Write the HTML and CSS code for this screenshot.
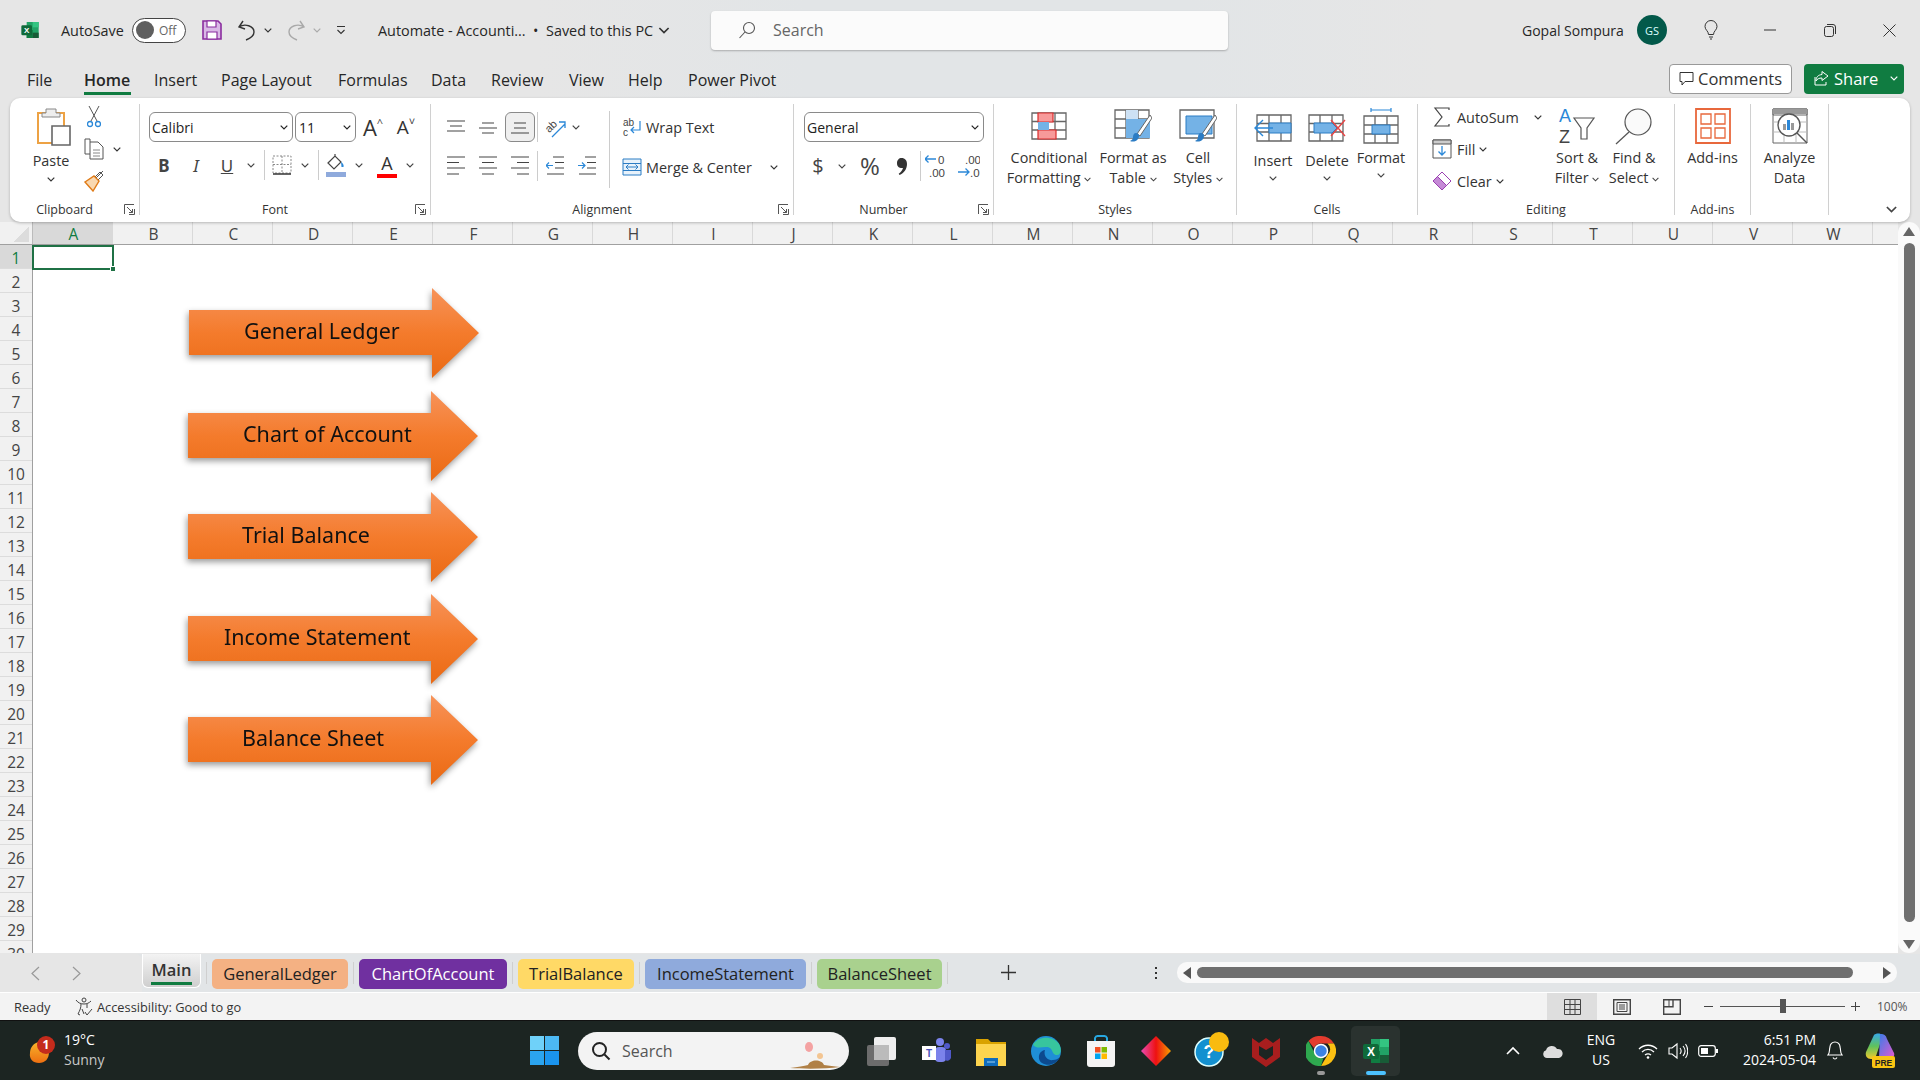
FILE: index.html
```html
<!DOCTYPE html>
<html lang="en">
<head>
<meta charset="utf-8">
<title>Automate - Accounting - Excel</title>
<link rel="stylesheet" href="styles.css">
</head>
<body>
<svg class="defs" width="0" height="0" aria-hidden="true">
  <defs>
    <symbol id="chev" viewBox="0 0 8 5"><path d="M.7.7 4 4 7.3.7" fill="none" stroke="currentColor" stroke-width="1.2"/></symbol>
    <symbol id="launch" viewBox="0 0 11 11"><path d="M.5 10V.5H10M4 1.5v0M10.5 5v5.5H5M3 3l5.5 5.5M8.5 5v3.5H5" fill="none" stroke="#555" stroke-width="1"/></symbol>
    <symbol id="xl" viewBox="0 0 30 30"><path fill="#21a366" d="M10 3h18v24H10z"/><path fill="#33c481" d="M19 3h9v8h-9z"/><path fill="#107c41" d="M10 15h9v12h-9z"/><path fill="#185c37" d="M19 19h9v8h-9z"/><rect x="2" y="8" width="16" height="15" rx="2" fill="#0f6a3a"/><text x="10" y="20" class="xl-x">X</text></symbol>
    <linearGradient id="arrowfill" x1="0" y1="0" x2="0" y2="1"><stop offset="0" stop-color="#f7935a"/><stop offset=".5" stop-color="#f47b2c"/><stop offset="1" stop-color="#ea6a14"/></linearGradient>
    <symbol id="arrow" viewBox="0 0 290 90"><path fill="url(#arrowfill)" d="M0 22h243V0l47 45-47 45V67H0z"/></symbol>
  </defs>
</svg>

<header class="titlebar">
  <svg class="logo" width="20" height="20"><use href="#xl"/></svg>
  <span class="autosave">AutoSave</span>
  <span class="toggle"><i class="knob"></i><span>Off</span></span>
  <svg class="save" width="20" height="20" viewBox="0 0 20 20"><path d="M1 1h15l3 3v15H1z" fill="#d9b8e6" stroke="#8a2c9f" stroke-width="1.6"/><path d="M5 1h9v6H5zM5 12h10v7H5z" fill="#fff" stroke="#8a2c9f" stroke-width="1.2"/></svg>
  <svg class="undo" width="19" height="21" viewBox="0 0 19 21"><path d="M6 1 2 7l6 2M2 7c6-4 15-1 15 5 0 4-3 6-8 8" fill="none" stroke="#333" stroke-width="1.4"/></svg>
  <svg class="tchev" width="8" height="5"><use href="#chev"/></svg>
  <svg class="redo" width="19" height="21" viewBox="0 0 19 21"><path d="m13 1 4 6-6 2M17 7C11 3 2 6 2 12c0 4 3 6 8 8" fill="none" stroke="#a9a9a9" stroke-width="1.4"/></svg>
  <svg class="tchev dim" width="8" height="5"><use href="#chev"/></svg>
  <svg class="custom" width="10" height="10" viewBox="0 0 10 10"><path d="M1 1.500h8M1.500 5l3.500 3.500L8.500 5" fill="none" stroke="#333" stroke-width="1.100"/></svg>
  <span class="doc">Automate - Accounti... &nbsp;•&nbsp; Saved to this PC</span>
  <svg class="docchev" width="12" height="7"><use href="#chev"/></svg>
  <div class="search"><svg width="18" height="18" viewBox="0 0 18 18"><circle cx="11" cy="7" r="5.500" fill="none" stroke="#555" stroke-width="1.100"/><path d="M7 11 1.500 17" stroke="#555" stroke-width="1.100"/></svg><span>Search</span></div>
  <span class="user">Gopal Sompura</span>
  <span class="avatar">GS</span>
  <svg class="bulb" width="14" height="20" viewBox="0 0 14 20"><path d="M4.500 14.500C4.500 11 1 10 1 6.500a6 6 0 0 1 12 0c0 3.500-3.500 4.500-3.500 8zM5 17h4M6 19h2" fill="none" stroke="#333"/></svg>
  <svg class="min" width="12" height="2"><path d="M0 1h12" stroke="#333"/></svg>
  <svg class="rest" width="12" height="13" viewBox="0 0 12 13"><rect x=".5" y="2.500" width="9" height="10" rx="2" fill="none" stroke="#333"/><path d="M3 .5h6a2.500 2.500 0 0 1 2.500 2.500v7" fill="none" stroke="#333"/></svg>
  <svg class="close" width="13" height="13" viewBox="0 0 13 13"><path d="m.5.5 12 12m0-12-12 12" stroke="#333"/></svg>
</header>

<nav class="tabs">
  <span class="t-file">File</span>
  <span class="t-home">Home</span>
  <span class="t-ins">Insert</span>
  <span class="t-pl">Page Layout</span>
  <span class="t-for">Formulas</span>
  <span class="t-data">Data</span>
  <span class="t-rev">Review</span>
  <span class="t-view">View</span>
  <span class="t-help">Help</span>
  <span class="t-pp">Power Pivot</span>
  <button class="comments"><svg width="15" height="15" viewBox="0 0 15 15"><path d="M1 1.500h13v9H6l-3 3.500v-3.500H1z" fill="none" stroke="#333"/></svg>Comments</button>
  <button class="share"><svg width="15" height="16" viewBox="0 0 15 16"><path d="M8 1.500 14 6l-6 4.500V8C5 8 3 9 2 11c0-4 2-6 6-6.500zM1 7v8h11v-3" fill="none" stroke="#fff"/></svg>Share<svg class="sharechev" width="8" height="5"><use href="#chev"/></svg></button>
</nav>

<section class="ribbon">
  <div class="group g-clip">
    <div class="body clip">
      <div class="paste">
        <svg class="pasteic" width="34" height="38" viewBox="0 0 34 38"><path d="M1 5h26v30H1z" fill="#fff" stroke="#eda244" stroke-width="2"/><path d="M9 5V1h10v4h4v4H5V5z" fill="#eee" stroke="#888"/><path d="M15 18h18v19H15z" fill="#fff" stroke="#666" stroke-width="1.600"/></svg>
        <span class="lbl">Paste</span>
        <svg class="ch" width="8" height="5"><use href="#chev"/></svg>
      </div>
      <div class="smallcol">
        <svg width="14" height="24" viewBox="0 0 14 24"><path d="M2 1l8 15M12 1 4 16" stroke="#555" fill="none"/><circle cx="3" cy="19" r="2.500" fill="none" stroke="#2b88d8" stroke-width="1.300"/><circle cx="11" cy="19" r="2.500" fill="none" stroke="#2b88d8" stroke-width="1.300"/></svg>
        <div class="copyrow"><svg width="20" height="22" viewBox="0 0 20 22"><path d="M6 4V1H1v15h5" fill="none" stroke="#555"/><path d="M6 4h8l5 5v12H6z" fill="#fff" stroke="#555"/><path d="M9 12h7M9 15h7M9 18h7" stroke="#888"/></svg><svg class="copychev" width="8" height="5"><use href="#chev"/></svg></div>
        <svg width="20" height="22" viewBox="0 0 20 22"><path d="M12 8 19 1M14 10l5-5-3-3-5 5z" fill="#fff" stroke="#555"/><path d="M1 12 10 6l5 5-6 10z" fill="#f9d8b0" stroke="#e07b17" stroke-width="1.400"/></svg>
      </div>
    </div>
    <div class="label">Clipboard</div>
    <svg class="launcher" width="11" height="11"><use href="#launch"/></svg>
  </div>

  <div class="group g-font">
    <div class="body stack fontstack">
      <div class="row fontrow1">
        <div class="select f-name"><span>Calibri</span><svg width="8" height="5"><use href="#chev"/></svg></div>
        <div class="select f-size"><span>11</span><svg width="8" height="5"><use href="#chev"/></svg></div>
        <span class="grow">A<sup>^</sup></span>
        <span class="shrink">A<sup>˅</sup></span>
      </div>
      <div class="row fontrow2">
        <b class="ib">B</b>
        <i class="ib slant">I</i>
        <u class="ib">U</u>
        <svg class="cc" width="8" height="5"><use href="#chev"/></svg>
        <span class="vs"></span>
        <svg class="cc" width="20" height="20" viewBox="0 0 20 20"><path d="M1 1h18v17H1zM10 1v17M1 9.500h18" fill="none" stroke="#888" stroke-dasharray="2 1.500"/><path d="M1 19h18" stroke="#333" stroke-width="1.500"/></svg>
        <svg class="cc" width="8" height="5"><use href="#chev"/></svg>
        <span class="vs"></span>
        <svg class="cc" width="20" height="24" viewBox="0 0 20 24"><path d="m2 10 7-7 6 6-7 7zM9 3V1" fill="none" stroke="#444" stroke-width="1.200"/><path d="M15 9c2 1 3 3 2.500 5h-2z" fill="#2b88d8"/><path d="M0 19h20v5H0z" fill="#8faadc"/></svg>
        <svg class="cc" width="8" height="5"><use href="#chev"/></svg>
        <span class="fonta">A</span>
        <svg class="cc" width="8" height="5"><use href="#chev"/></svg>
      </div>
    </div>
    <div class="label">Font</div>
    <svg class="launcher" width="11" height="11"><use href="#launch"/></svg>
  </div>

  <div class="group g-align">
    <div class="body alignbody">
      <div class="stack alignleft">
        <div class="row alignrow1">
          <svg class="cc" width="18" height="14" viewBox="0 0 18 14"><path d="M0 1h18M3 6h12M0 11h18" stroke="#444" stroke-width="1.100"/></svg>
          <svg class="cc" width="18" height="14" viewBox="0 0 18 14"><path d="M3 3h12M0 8h18M3 13h12" stroke="#444" stroke-width="1.100"/></svg>
          <span class="active"><svg width="18" height="14" viewBox="0 0 18 14"><path d="M3 3h12M3 8h12M0 13h18" stroke="#444" stroke-width="1.100"/></svg></span>
          <span class="vs tall"></span>
          <svg class="cc" width="22" height="22" viewBox="0 0 22 22"><path d="m8 21 13-13M15 6h6v6" fill="none" stroke="#2b88d8" stroke-width="1.300"/><text x="1" y="15" class="abtxt" transform="rotate(-45 6 11)">ab</text></svg>
          <svg class="cc" width="8" height="5"><use href="#chev"/></svg>
        </div>
        <div class="row alignrow2">
          <svg class="cc" width="18" height="20" viewBox="0 0 18 20"><path d="M0 1h18M0 6.500h12M0 12h18M0 18h12" stroke="#444" stroke-width="1.100"/></svg>
          <svg class="cc" width="18" height="20" viewBox="0 0 18 20"><path d="M0 1h18M3 6.500h12M0 12h18M3 18h12" stroke="#444" stroke-width="1.100"/></svg>
          <svg class="cc" width="18" height="20" viewBox="0 0 18 20"><path d="M0 1h18M6 6.500h12M0 12h18M6 18h12" stroke="#444" stroke-width="1.100"/></svg>
          <span class="vs tall"></span>
          <svg class="cc" width="18" height="20" viewBox="0 0 18 20"><path d="M7 1h11M9 6.500h9M9 12h9M1 18h17" stroke="#444" stroke-width="1.100"/><path d="M7 9.500H0m3-3-3 3 3 3" fill="none" stroke="#2b88d8" stroke-width="1.200"/></svg>
          <svg class="cc" width="18" height="20" viewBox="0 0 18 20"><path d="M7 1h11M9 6.500h9M9 12h9M1 18h17" stroke="#444" stroke-width="1.100"/><path d="M0 9.500h7m-3-3 3 3-3 3" fill="none" stroke="#2b88d8" stroke-width="1.200"/></svg>
        </div>
      </div>
      <div class="wrapcol">
        <div class="wm"><svg width="20" height="22" viewBox="0 0 20 22"><text x="1" y="10" class="abtxt2">ab</text><text x="1" y="20" class="abtxt2">c</text><path d="M18 5v9H9m3-3-3 3 3 3" fill="none" stroke="#2b88d8" stroke-width="1.200"/></svg><span>Wrap Text</span></div>
        <div class="wm"><svg width="20" height="18" viewBox="0 0 20 18"><path d="M1 1h18v16H1zM1 5.500h18M1 12.500h18" fill="#e8f2fb" stroke="#2b7cc4"/><path d="M4 9h12M6.500 6.500 4 9l2.500 2.500m7-5L16 9l-2.500 2.500" fill="none" stroke="#2b7cc4"/></svg><span>Merge &amp; Center</span><svg class="mc" width="8" height="5"><use href="#chev"/></svg></div>
      </div>
    </div>
    <div class="label">Alignment</div>
    <svg class="launcher" width="11" height="11"><use href="#launch"/></svg>
  </div>

  <div class="group g-num">
    <div class="body stack numstack">
      <div class="select n-fmt"><span>General</span><svg width="8" height="5"><use href="#chev"/></svg></div>
      <div class="row numrow">
        <span class="cc dollar">$</span>
        <svg class="cc" width="8" height="5"><use href="#chev"/></svg>
        <span class="cc pct">%</span>
        <svg class="cc" width="10" height="17" viewBox="0 0 10 17"><path d="M4.500 0C8 0 10 2.500 10 6c0 5-3 9-7.500 11l-.8-1.200C4 14 5.500 12 6 10 3 10.500 0 9 0 5.200 0 2 2 0 4.500 0z" fill="#333"/></svg>
        <span class="vs tall"></span>
        <svg class="cc" width="22" height="26" viewBox="0 0 22 26"><path d="M11 6H0m3.500-3.500L0 6l3.500 3.500" fill="none" stroke="#2b88d8" stroke-width="1.300"/><text x="13" y="11" class="dec">0</text><text x="4" y="24" class="dec">.00</text></svg>
        <svg class="cc" width="22" height="26" viewBox="0 0 22 26"><text x="7" y="11" class="dec">.00</text><path d="M0 19h11m-3.500-3.500L11 19l-3.500 3.500" fill="none" stroke="#2b88d8" stroke-width="1.300"/><text x="12" y="24" class="dec">.0</text></svg>
      </div>
    </div>
    <div class="label">Number</div>
    <svg class="launcher" width="11" height="11"><use href="#launch"/></svg>
  </div>

  <div class="group g-styles">
    <div class="body bigs">
      <div class="big w88">
        <div class="bigic"><svg width="36" height="28" viewBox="0 0 36 28"><path d="M1 1h34v26H1zM1 9.500h34M1 18h34M12 1v26M24 1v26" fill="none" stroke="#666" stroke-width="1.300"/><path d="M7 1h15v9H7zM7 18h18v9H7z" fill="#f79a9a" stroke="#d92c2c" stroke-width="1.200"/><path d="M7 10h11v8H7z" fill="#74b2e6"/></svg></div>
        <span>Conditional</span><span>Formatting <svg width="7" height="5"><use href="#chev"/></svg></span>
      </div>
      <div class="big w80">
        <div class="bigic"><svg width="38" height="34" viewBox="0 0 38 34"><path d="M1 1h34v28H1zM1 10h34M1 19h34M12 1v28M24 1v28" fill="none" stroke="#666" stroke-width="1.300"/><path d="M12 10h24v19H12z" fill="#74b2e6"/><path d="M12 1h12v9H12z" fill="#cde1f4"/><path d="M36 6 23 25l3 2L38 9z" fill="#fff" stroke="#666"/><path d="M22 24c3 0 4 3 2 6-2 3-6 3-8 2 2-1 3-2 3-4 0-2 1-4 3-4z" fill="#2b7cc4"/></svg></div>
        <span>Format as</span><span>Table <svg width="7" height="5"><use href="#chev"/></svg></span>
      </div>
      <div class="big w50">
        <div class="bigic"><svg width="38" height="34" viewBox="0 0 38 34"><path d="M1 1h34v28H1z" fill="none" stroke="#666" stroke-width="1.300"/><path d="M7 7h26v18H7z" fill="#74b2e6" stroke="#2b7cc4"/><path d="M36 6 23 25l3 2L38 9z" fill="#fff" stroke="#666"/><path d="M22 24c3 0 4 3 2 6-2 3-6 3-8 2 2-1 3-2 3-4 0-2 1-4 3-4z" fill="#2b7cc4"/></svg></div>
        <span>Cell</span><span>Styles <svg width="7" height="5"><use href="#chev"/></svg></span>
      </div>
    </div>
    <div class="label">Styles</div>
  </div>

  <div class="group g-cells">
    <div class="body bigs">
      <div class="big w54 low">
        <div class="bigic"><svg width="38" height="28" viewBox="0 0 38 28"><path d="M3 1h34v26H3zM3 9.500h34M3 18h34M15 1v26M27 1v26" fill="none" stroke="#666" stroke-width="1.300"/><path d="M15 9h22v10H15z" fill="#74b2e6" stroke="#2b7cc4"/><path d="M1 14h18M9 6l-8 8 8 8" fill="none" stroke="#2b88d8" stroke-width="1.400"/></svg></div>
        <span>Insert</span><svg class="bc" width="8" height="5"><use href="#chev"/></svg>
      </div>
      <div class="big w54 low">
        <div class="bigic"><svg width="38" height="28" viewBox="0 0 38 28"><path d="M1 1h34v26H1zM1 9.500h34M1 18h34M12 1v26M24 1v26" fill="none" stroke="#666" stroke-width="1.300"/><path d="M6 9h18l5 5-5 5H6z" fill="#74b2e6" stroke="#2b7cc4"/><path d="m23 6 14 16m0-16L23 22" stroke="#e84545" stroke-width="1.400"/></svg></div>
        <span>Delete</span><svg class="bc" width="8" height="5"><use href="#chev"/></svg>
      </div>
      <div class="big w54">
        <div class="bigic"><svg width="36" height="36" viewBox="0 0 36 36"><path d="M8 2h20M8 0v4M28 0v4" stroke="#2b88d8" stroke-width="1.200"/><path d="M1 8h34v27H1zM1 17h34M1 26h34M12 8v27M24 8v27" fill="none" stroke="#666" stroke-width="1.300"/><path d="M9 17h18v9H9z" fill="#74b2e6" stroke="#2b7cc4"/></svg></div>
        <span>Format</span><svg class="bc" width="8" height="5"><use href="#chev"/></svg>
      </div>
    </div>
    <div class="label">Cells</div>
  </div>

  <div class="group g-edit">
    <div class="body editbody">
      <div class="editcol">
        <div class="er"><svg width="20" height="20" viewBox="0 0 20 20"><path d="M17 3V1H3l7 9-7 9h14v-2" fill="none" stroke="#444" stroke-width="1.200"/></svg><span>AutoSum</span><svg class="ec1" width="8" height="5"><use href="#chev"/></svg></div>
        <div class="er"><svg width="20" height="20" viewBox="0 0 20 20"><path d="M1 1h18v18H1z" fill="#fff" stroke="#555"/><path d="M1 1h18v4H1z" fill="#ccc" stroke="#555"/><path d="M10 7v9m-3.500-3.500L10 16l3.500-3.500" fill="none" stroke="#2b88d8" stroke-width="1.300"/></svg><span>Fill</span><svg width="8" height="5"><use href="#chev"/></svg></div>
        <div class="er"><svg width="20" height="20" viewBox="0 0 20 20"><path d="m10 1 9 9-9 9-9-9z" fill="#fff" stroke="#9a3fb0"/><path d="m5.500 5.500 9 9L10 19l-9-9z" fill="#c58ad6" stroke="#9a3fb0"/></svg><span>Clear</span><svg width="8" height="5"><use href="#chev"/></svg></div>
      </div>
      <div class="big w54 tight">
        <div class="bigic"><svg width="38" height="42" viewBox="0 0 38 42"><text x="1" y="17" class="sort blue">A</text><text x="1" y="38" class="sort">Z</text><path d="M16 13h20l-7 10v11h-6V23z" fill="none" stroke="#555" stroke-width="1.200"/></svg></div>
        <span>Sort &amp;</span><span>Filter <svg width="7" height="5"><use href="#chev"/></svg></span>
      </div>
      <div class="big w60 tight">
        <div class="bigic"><svg width="38" height="38" viewBox="0 0 38 38"><circle cx="23" cy="15" r="13" fill="#fafafa" stroke="#555" stroke-width="1.200"/><path d="M14 25 1 37" stroke="#555" stroke-width="1.200"/></svg></div>
        <span>Find &amp;</span><span>Select <svg width="7" height="5"><use href="#chev"/></svg></span>
      </div>
    </div>
    <div class="label">Editing</div>
  </div>

  <div class="group g-addin">
    <div class="body bigs center">
      <div class="big">
        <div class="bigic"><svg width="36" height="36" viewBox="0 0 36 36"><path d="M1 1h34v34H1z" fill="none" stroke="#e8683c" stroke-width="1.800"/><path d="M6 6h10v10H6zM20 6h10v10H20zM6 20h10v10H6zM20 20h10v10H20z" fill="#fff" stroke="#e8683c" stroke-width="1.300"/></svg></div>
        <span>Add-ins</span>
      </div>
    </div>
    <div class="label">Add-ins</div>
  </div>

  <div class="group g-an">
    <div class="body bigs center">
      <div class="big">
        <div class="bigic"><svg width="36" height="36" viewBox="0 0 36 36"><path d="M1 1h34v34H1zM1 1h34v6H1z" fill="#fff" stroke="#666"/><path d="M1 1h34v5H1z" fill="#999"/><path d="M1 14h34M1 24h34M12 7v28M24 7v28" stroke="#bbb"/><circle cx="17" cy="17" r="11" fill="#fff" stroke="#555" stroke-width="1.400"/><path d="M11 16h3v6h-3zM19 15h3v7h-3z" fill="#999"/><path d="M15 12h3v10h-3z" fill="#2b88d8"/><path d="m25 25 10 10" stroke="#555" stroke-width="1.400"/></svg></div>
        <span>Analyze</span><span>Data</span>
      </div>
    </div>
  </div>
  <div class="collapse"><svg width="13" height="7"><use href="#chev"/></svg></div>
</section>

<main class="gridwrap">
  <div class="sheetcol">
    <div class="colhead">
      <div class="corner"><i></i></div>
      <span class="sel">A</span><span>B</span><span>C</span><span>D</span><span>E</span><span>F</span><span>G</span><span>H</span><span>I</span><span>J</span><span>K</span><span>L</span><span>M</span><span>N</span><span>O</span><span>P</span><span>Q</span><span>R</span><span>S</span><span>T</span><span>U</span><span>V</span><span>W</span><span class="last"></span>
    </div>
    <div class="sheet">
      <div class="rowhead">
        <span class="sel">1</span><span>2</span><span>3</span><span>4</span><span>5</span><span>6</span><span>7</span><span>8</span><span>9</span><span>10</span><span>11</span><span>12</span><span>13</span><span>14</span><span>15</span><span>16</span><span>17</span><span>18</span><span>19</span><span>20</span><span>21</span><span>22</span><span>23</span><span>24</span><span>25</span><span>26</span><span>27</span><span>28</span><span>29</span><span>30</span>
      </div>
      <div class="canvas">
        <div class="cellsel"><i></i></div>
        <div class="shape a1"><svg width="290" height="90"><use href="#arrow"/></svg><span>General Ledger</span></div>
        <div class="shape a2"><svg width="290" height="90"><use href="#arrow"/></svg><span>Chart of Account</span></div>
        <div class="shape a3"><svg width="290" height="90"><use href="#arrow"/></svg><span>Trial Balance</span></div>
        <div class="shape a4"><svg width="290" height="90"><use href="#arrow"/></svg><span>Income Statement</span></div>
        <div class="shape a5"><svg width="290" height="90"><use href="#arrow"/></svg><span>Balance Sheet</span></div>
      </div>
    </div>
  </div>
  <div class="vscroll">
    <svg width="12" height="9" viewBox="0 0 12 9"><path d="M6 0l6 9H0z" fill="#666"/></svg>
    <i></i>
    <svg width="12" height="9" viewBox="0 0 12 9"><path d="M6 9 12 0H0z" fill="#666"/></svg>
  </div>
</main>

<section class="tabbar">
  <div class="nav">
    <svg width="9" height="15" viewBox="0 0 9 15"><path d="M8 1 1 7.500 8 14" fill="none" stroke="#999" stroke-width="1.200"/></svg>
    <svg width="9" height="15" viewBox="0 0 9 15"><path d="m1 1 7 6.500L1 14" fill="none" stroke="#999" stroke-width="1.200"/></svg>
  </div>
  <div class="sh main-sh"><span>Main</span></div>
  <i class="shsep"></i>
  <div class="sh c1">GeneralLedger</div>
  <i class="shsep"></i>
  <div class="sh c2">ChartOfAccount</div>
  <i class="shsep"></i>
  <div class="sh c3">TrialBalance</div>
  <i class="shsep"></i>
  <div class="sh c4">IncomeStatement</div>
  <i class="shsep"></i>
  <div class="sh c5">BalanceSheet</div>
  <i class="shsep"></i>
  <svg class="plus" width="15" height="15" viewBox="0 0 15 15"><path d="M7.500 0v15M0 7.500h15" stroke="#333" stroke-width="1.300"/></svg>
  <svg class="dots" width="4" height="14" viewBox="0 0 4 14"><path d="M1 1h2v2H1zM1 6h2v2H1zM1 11h2v2H1z" fill="#333"/></svg>
  <div class="hscroll">
    <svg width="8" height="12" viewBox="0 0 8 12"><path d="M0 6l8-6v12z" fill="#555"/></svg>
    <i></i>
    <svg width="8" height="12" viewBox="0 0 8 12"><path d="M8 6 0 0v12z" fill="#555"/></svg>
  </div>
</section>

<footer class="status">
  <span class="ready">Ready</span>
  <svg class="acc" width="18" height="19" viewBox="0 0 18 19"><circle cx="9" cy="3" r="2" fill="none" stroke="#444"/><path d="M1 3c2 3 5 4 8 4s5-1 7-3M6 7c0 4-1 6-3 10M12 7v4M3 17l2 1M7 12l2 5" fill="none" stroke="#444"/><path d="m10 15 2 3 5-6" fill="none" stroke="#444"/></svg>
  <span class="a11y">Accessibility: Good to go</span>
  <div class="viewbtn"><svg width="17" height="16" viewBox="0 0 17 16"><path d="M.5.5h16v15H.500zM.5 5.500h16M.5 10.500h16M6 .5v15M11 .5v15" fill="none" stroke="#444"/></svg></div>
  <svg class="pagev" width="18" height="16" viewBox="0 0 18 16"><path d="M.7.7h16.600v14.600H.700z" fill="none" stroke="#444" stroke-width="1.400"/><path d="M4 3.500h10v9H4zM6 6h6M6 8h6M6 10h6" fill="none" stroke="#444"/></svg>
  <svg class="breakv" width="18" height="16" viewBox="0 0 18 16"><path d="M.7.7h16.600v14.600H.700zM10 .7v7H.7" fill="none" stroke="#444" stroke-width="1.400"/><path d="M6 .7v7" stroke="#444"/></svg>
  <svg class="zm" width="9" height="9" viewBox="0 0 9 9"><path d="M0 4.500h9" stroke="#444"/></svg>
  <div class="slider"><i></i></div>
  <svg class="zp" width="9" height="9" viewBox="0 0 9 9"><path d="M0 4.500h9M4.500 0v9" stroke="#444"/></svg>
  <span class="zoomv">100%</span>
</footer>

<footer class="taskbar">
  <div class="weather">
    <svg width="30" height="30" viewBox="0 0 30 30"><path d="M10 7c6-3 13 2 13 9s-4 11-10 11-10-4-9-10c0-4 2-8 6-10z" fill="url(#sun)"/><defs><linearGradient id="sun" x1="0" y1="0" x2="0" y2="1"><stop offset="0" stop-color="#f7b32b"/><stop offset="1" stop-color="#ee6f11"/></linearGradient></defs><circle cx="20" cy="9" r="9" fill="#c42b1c"/><text x="20" y="13" class="badge">1</text></svg>
    <div class="wt"><span>19°C</span><span class="dimt">Sunny</span></div>
  </div>
  <svg class="win" width="29" height="29" viewBox="0 0 29 29"><path fill="#6fd1f9" d="M0 0h14v14H0z"/><path fill="#4cb9f4" d="M15 0h14v14H15z"/><path fill="#2ba4ef" d="M0 15h14v14H0z"/><path fill="#1a94ee" d="M15 15h14v14H15z"/></svg>
  <div class="tsearch">
    <svg width="20" height="20" viewBox="0 0 20 20"><circle cx="8.500" cy="8.500" r="6.500" fill="none" stroke="#222" stroke-width="2"/><path d="m13.500 13.500 5 5" stroke="#222" stroke-width="2"/></svg>
    <span>Search</span>
    <svg class="deco" width="56" height="38" viewBox="0 0 56 38"><ellipse cx="22" cy="15" rx="4" ry="5" fill="#f4a2a2"/><circle cx="33" cy="24" r="3" fill="#f3c592"/><path d="M3 36c8-1 14-2 18-3 2-6 14-6 16 0 5 1 10 1 16 2-14 2-36 2-50 1z" fill="#b08046"/></svg>
  </div>
  <div class="apps">
    <svg width="30" height="30" viewBox="0 0 30 30"><rect x="1" y="9" width="22" height="21" rx="2" fill="#6c6c6c"/><rect x="8" y="1" width="22" height="23" rx="2" fill="#eee"/><rect x="8" y="9" width="15" height="15" fill="#bbb"/></svg>
    <svg width="30" height="30" viewBox="0 0 30 30"><circle cx="19" cy="6" r="4" fill="#7b83eb"/><circle cx="26" cy="10" r="3" fill="#5059c9"/><rect x="14" y="11" width="11" height="15" rx="4" fill="#7b83eb"/><path d="M24 14h6v8a4 4 0 0 1-6 2z" fill="#5059c9"/><rect x="1" y="10" width="14" height="14" fill="#fff"/><text x="8" y="21" class="teams">T</text></svg>
    <svg width="30" height="30" viewBox="0 0 30 30"><path d="M0 3h12l3 3h15v6H0z" fill="#d9a200"/><path d="M0 8h30v22H0z" fill="#fdd44f"/><path d="M8 22h14v8H8z" fill="#0f6cbd"/><path d="M11 26h8" stroke="#9fd0ef"/></svg>
    <svg width="30" height="30" viewBox="0 0 30 30"><circle cx="15" cy="15" r="15" fill="#1f8fd6"/><path d="M2 9C6 0 22-1 28 8c3 5 2 11-2 11-6 0-3-8-11-8-5 0-9 2-13-2z" fill="#37c59d"/><path d="M29 21c-3 7-12 10-18 6-5-3-4-12 3-13-2 6 3 11 8 10 3 0 5-1 7-3z" fill="#0c4a8f"/></svg>
    <svg width="30" height="32" viewBox="0 0 30 32"><path d="M9 7V3a3 3 0 0 1 3-2h6a3 3 0 0 1 3 2v4" fill="none" stroke="#27a7e0" stroke-width="2"/><path d="M1 6h28v23a3 3 0 0 1-3 3H4a3 3 0 0 1-3-3z" fill="#f4f4f4"/><path fill="#f25022" d="M9 12h5.500v5.500H9z"/><path fill="#7fba00" d="M15.500 12H21v5.500h-5.500z"/><path fill="#00a4ef" d="M9 18.500h5.500V24H9z"/><path fill="#ffb900" d="M15.500 18.500H21V24h-5.500z"/></svg>
    <svg width="30" height="30" viewBox="0 0 30 30"><defs><linearGradient id="dia" x1="0" y1="0" x2="1" y2="0"><stop offset="0" stop-color="#e84bb4"/><stop offset=".5" stop-color="#ee1111"/><stop offset="1" stop-color="#f7a000"/></linearGradient></defs><path d="M15 0 30 15 15 30 0 15z" fill="url(#dia)"/></svg>
    <svg class="helpic" width="36" height="36" viewBox="0 0 36 36"><circle cx="15" cy="21" r="14" fill="#1390d0" stroke="#dff" stroke-width="1.500"/><text x="15" y="27" class="q">?</text><circle cx="25" cy="11" r="10" fill="#f9bb0f"/></svg>
    <svg width="30" height="32" viewBox="0 0 30 32"><path d="M1 3 8 8l7-5 7 5 7-5v19L15 32 1 22z" fill="#a81e1e"/><path d="m8 11 7 4 7-4v9l-7 5-7-5z" fill="#1c2522"/></svg>
    <svg width="30" height="30" viewBox="0 0 30 30"><path d="M15 0a15 15 0 0 1 13 7.500H15a7.500 7.500 0 0 0-7 4.500L2.500 5A15 15 0 0 1 15 0z" fill="#e33b2e"/><path d="M28 7.500A15 15 0 0 1 15 30l6.500-11a7.500 7.500 0 0 0 0-11.500z" fill="#fbc012"/><path d="M15 30A15 15 0 0 1 2.500 5L8.500 17a7.500 7.500 0 0 0 9 5z" fill="#2ea84f"/><circle cx="15" cy="15" r="6.500" fill="#3b82e5" stroke="#fff" stroke-width="1.500"/></svg>
    <div class="xlactive"><svg width="30" height="30"><use href="#xl"/></svg><i></i></div>
    <i class="chromedot"></i>
  </div>
  <div class="tray">
    <svg class="caret" width="14" height="9" viewBox="0 0 14 9"><path d="m1 8 6-6 6 6" fill="none" stroke="#fff" stroke-width="1.600"/></svg>
    <svg class="cloud" width="20" height="14" viewBox="0 0 20 14"><path d="M4 14a4 4 0 0 1-1-7.800A6 6 0 0 1 14 5a4.500 4.500 0 0 1 2 9z" fill="#ddd"/></svg>
    <div class="lang"><span>ENG</span><span>US</span></div>
    <svg class="wifi" width="20" height="16" viewBox="0 0 20 16"><path d="M1 6c5-5 13-5 18 0M4 9c3.500-3.500 8.500-3.500 12 0M7 12c2-1.500 4-1.500 6 0" fill="none" stroke="#fff" stroke-width="1.300"/><circle cx="10" cy="14.500" r="1.300" fill="#fff"/></svg>
    <svg class="vol" width="20" height="18" viewBox="0 0 20 18"><path d="M1 6h3l5-4v14l-5-4H1z" fill="none" stroke="#fff" stroke-width="1.100"/><path d="M12 6c1.500 2 1.500 4 0 6M15 4c2.500 3 2.500 7 0 10M17.500 2c3 4 3 10 0 14" fill="none" stroke="#fff" stroke-width="1.100"/></svg>
    <svg class="batt" width="20" height="12" viewBox="0 0 20 12"><rect x=".7" y=".7" width="16.600" height="10.600" rx="2.500" fill="none" stroke="#fff" stroke-width="1.200"/><rect x="3" y="3" width="7" height="6" fill="#fff"/><rect x="18" y="4" width="2" height="4" fill="#fff"/></svg>
    <div class="clock"><span>6:51 PM</span><span>2024-05-04</span></div>
    <svg class="bell" width="16" height="19" viewBox="0 0 16 19"><path d="M1 14c2-2 1-5 2-8a5 5 0 0 1 10 0c1 3 0 6 2 8zM6 16.500c1 2 3 2 4 0" fill="none" stroke="#fff" stroke-width="1.100"/></svg>
    <svg class="copilot" width="30" height="36" viewBox="0 0 30 36"><defs><linearGradient id="cop" x1="0" y1="0" x2="0" y2="1"><stop offset="0" stop-color="#38a8e8"/><stop offset=".5" stop-color="#5fc25c"/><stop offset="1" stop-color="#f3c92b"/></linearGradient><linearGradient id="cop2" x1="0" y1="0" x2="1" y2="1"><stop offset="0" stop-color="#3a7ce8"/><stop offset="1" stop-color="#e25ad0"/></linearGradient></defs><path d="M9 2c2-2 6-2 9 0L10 26H6c-4 0-6-3-5-7z" fill="url(#cop)"/><path d="M15 1c4 0 6 1 7 5l7 14c1 3-1 5-4 5H14z" fill="url(#cop2)"/><rect x="7" y="23" width="23" height="12" rx="2" fill="#f9c513"/><text x="18.500" y="32.500" class="pre">PRE</text></svg>
  </div>
</footer>
</body>
</html>
```
FILE: styles.css
```css
* { box-sizing: border-box; }
html, body { margin: 0; height: 100%; }
body {
  width: 1920px; height: 1080px; overflow: hidden;
  display: flex; flex-direction: column;
  font-family: "Open Sans", "Noto Sans", "Liberation Sans", sans-serif;
  color: #262626; background: #e6e6e6; font-size: 13px;
}
.defs { position: absolute; }
svg { display: block; flex: none; }
i { font-style: normal; }
.xl-x { font: 700 12px "Liberation Sans", sans-serif; fill: #fff; text-anchor: middle; }

/* title bar */
.titlebar {
  height: 60px; display: flex; align-items: center;
  padding-left: 20px; font-size: 14.400px;
  background: linear-gradient(90deg, #e6e6e6 0, #e6e6e6 28%, #e2e5e7 42%, #e2e5e7 62%, #e6e6e6 75%);
}
.autosave { margin-left: 21px; width: 71px; white-space: nowrap; }
.toggle {
  width: 54px; height: 25px; border: 1px solid #444; border-radius: 13px; background: #fff;
  display: flex; align-items: center; padding-left: 3px; font-size: 12px; color: #666;
}
.knob { width: 18px; height: 18px; border-radius: 50%; background: #5f5f5f; margin-right: 5px; }
.save { margin-left: 16px; }
.undo { margin-left: 15px; }
.tchev { margin-left: 8px; color: #333; width: 8px; }
.redo { margin-left: 15px; }
.dim { color: #aaa; }
.tchev.dim { margin-left: 7px; }
.custom { margin-left: 15px; }
.doc { margin-left: 32px; white-space: nowrap; width: 280px; }
.docchev { margin-left: 0; color: #333; }
.search {
  margin-left: 41px; width: 517px; height: 39px; border-radius: 4px; background: #fbfbfb;
  box-shadow: 0 1px 2px rgba(0,0,0,.25); display: flex; align-items: center;
  padding-left: 27px; gap: 17px; color: #666; font-size: 16px;
}
.user { margin-left: 294px; width: 115px; white-space: nowrap; font-size: 14px; }
.avatar {
  width: 30px; height: 30px; border-radius: 50%; background: #03594a; color: #dff;
  font-size: 11px; display: flex; align-items: center; justify-content: center;
}
.bulb { margin-left: 37px; }
.min { margin-left: 46px; }
.rest { margin-left: 48px; }
.close { margin-left: 47px; }

/* tabs */
.tabs { height: 38px; display: flex; align-items: flex-start; font-size: 16px; background: linear-gradient(90deg, #e6e6e6 0, #e6e6e6 28%, #e2e5e7 42%, #e2e5e7 62%, #e6e6e6 75%); line-height: 22px; white-space: nowrap; }
.tabs > span { padding-top: 9px; height: 35px; }
.t-file { margin-left: 27px; width: 57px; }
.t-home { width: 47px; font-weight: 600; border-bottom: 3px solid #107c41; margin-right: 23px; }
.t-ins { width: 67px; }
.t-pl { width: 117px; }
.t-for { width: 93px; }
.t-data { width: 60px; }
.t-rev { width: 78px; }
.t-view { width: 59px; }
.t-help { width: 60px; }
.t-pp { width: 90px; }
.comments {
  margin-left: 891px; margin-top: 4px; width: 123px; height: 30px; background: #fff; border: 1px solid #999;
  border-radius: 4px; font: 16.500px "Open Sans", sans-serif; color: #333; display: flex; align-items: center; justify-content: center; gap: 4px; padding: 0 0 2px;
}
.share {
  margin-left: 12px; margin-top: 4px; width: 100px; height: 30px; background: #107c41; border: 0; border-radius: 4px;
  color: #fff; font: 16.500px "Open Sans", sans-serif; display: flex; align-items: center; gap: 5px; padding: 0 0 2px 10px;
}
.sharechev { margin-left: 7px; color: #fff; }

/* ribbon */
.ribbon {
  height: 124px; margin: 0 10px; background: #fff; border-radius: 10px;
  box-shadow: 0 1px 3px rgba(0,0,0,.25); display: flex; position: relative; z-index: 2;
  padding: 6px 0 7px; font-size: 14.400px; color: #333;
}
.group { position: relative; display: flex; flex-direction: column; border-right: 1px solid #d0d0d0; }
.body { height: 91px; }
.label { text-align: center; font-size: 12.500px; line-height: 18px; height: 20px; padding-top: 6px; color: #333; white-space: nowrap; }
.launcher { position: absolute; right: 4px; bottom: 0; }
.g-clip { width: 130px; }
.g-font { width: 291px; }
.g-align { width: 363px; }
.g-num { width: 200px; }
.g-styles { width: 243px; }
.g-cells { width: 181px; }
.g-edit { width: 257px; }
.g-addin { width: 76px; }
.g-an { width: 78px; }
.g-an .label { display: none; }
.g-clip .label, .g-font .label, .g-align .label, .g-num .label { padding-right: 20px; }

.clip { display: flex; padding-left: 17px; }
.paste { width: 48px; display: flex; flex-direction: column; align-items: center; padding-top: 4px; }
.pasteic { margin-left: 6px; }
.paste .lbl { line-height: 20px; margin-top: 5px; }
.paste .ch { margin-top: 6px; }
.smallcol { margin-left: 9px; display: grid; grid-auto-rows: 26px; row-gap: 6px; align-items: center; justify-items: start; }
.smallcol > svg:first-child { margin-left: 3px; }
.copyrow { display: flex; align-items: center; gap: 9px; }

.stack { display: flex; flex-direction: column; padding-top: 8px; row-gap: 9px; }
.fontstack { row-gap: 8px; }
.row { display: grid; align-items: center; justify-items: center; height: 30px; }
.cc { color: #444; }
.vs { width: 1px; height: 30px; background: #ccc; }
.vs.tall { height: 30px; }
.select {
  height: 30px; border: 1px solid #8a8a8a; border-radius: 6px; display: flex; align-items: center;
  justify-content: space-between; padding: 0 4px 0 2px; font-size: 14px; color: #222;
}
.fontrow1 { padding-left: 9px; grid-template-columns: 144px 63px 34px 32px; column-gap: 0; justify-items: stretch; }
.f-size { margin-left: 2px; padding-left: 3px; }
.grow, .shrink { font-size: 22px; line-height: 28px; text-align: center; color: #333; font-family: "Open Sans", sans-serif; }
.shrink { font-size: 19px; }
.grow sup, .shrink sup { font-size: 11px; vertical-align: 9px; line-height: 0; color: #444; }
.fontrow2 { padding-left: 9px; grid-template-columns: 30px 34px 28px 20px 7px 28px 18px 8px 28px 18px 38px 8px; }
.ib { font-size: 17px; font-family: "Noto Sans", sans-serif; color: #444; }
.ib.slant { font-style: italic; }
.fonta { font-size: 18px; line-height: 21px; color: #333; border-bottom: 4px solid #f00; width: 20px; text-align: center; font-weight: 400; height: 25px; }

.alignbody { display: flex; }
.alignleft { width: 179px; border-right: 1px solid #ccc; height: 77px; margin-top: 7px; padding-top: 1px; }
.alignrow1, .alignrow2 { padding-left: 10px; grid-template-columns: 30px 34px 30px 4px 32px 10px; }
.alignrow2 { grid-template-columns: 30px 34px 30px 4px 32px 32px; }
.active { width: 30px; height: 30px; border: 1px solid #8a8a8a; border-radius: 6px; background: #efefef; display: flex; align-items: center; justify-content: center; }
.abtxt { font: 11px "Liberation Sans", sans-serif; fill: #444; }
.abtxt2 { font: 10px "Liberation Sans", sans-serif; fill: #444; }
.wrapcol { padding: 8px 0 0 12px; display: flex; flex-direction: column; row-gap: 10px; }
.wm { display: flex; align-items: center; height: 30px; gap: 4px; white-space: nowrap; }
.mc { margin-left: 14px; }

.numstack { padding-left: 10px; }
.n-fmt { width: 180px; }
.numrow { grid-template-columns: 28px 20px 36px 28px 8px 24px 9px 24px; }
.numrow > :nth-child(7) { grid-column: 8; }
.dollar { font-size: 20px; color: #444; line-height: 24px; }
.pct { font-size: 24px; line-height: 28px; color: #444; }
.dec { font: 11.500px "Liberation Sans", sans-serif; fill: #444; }

.bigs { display: flex; }
.g-styles .bigs { padding-left: 11px; }
.g-cells .bigs { padding-left: 9px; }
.bigs.center { justify-content: center; }
.big { display: flex; flex-direction: column; align-items: center; line-height: 20px; white-space: nowrap; }
.big svg { display: inline-block; vertical-align: 1px; }
.bigic { height: 44px; display: flex; align-items: center; justify-content: center; }
.w88 { width: 88px; } .w80 { width: 80px; } .w50 { width: 50px; } .w54 { width: 54px; } .w60 { width: 60px; }
.low .bigic { height: 47px; }
.bc { margin-top: 5px; color: #444; }
.big > span > svg { color: #444; }

.editbody { display: flex; }
.editcol { width: 132px; padding-left: 14px; display: grid; grid-auto-rows: 26px; row-gap: 6px; align-content: start; }
.er { display: flex; align-items: center; white-space: nowrap; }
.er > svg:first-child { margin-right: 5px; }
.er > span { margin-right: 4px; }
.er .ec1 { margin-left: 11px; }
.sort { font: 18px "Liberation Sans", sans-serif; fill: #444; }
.sort.blue { fill: #2b88d8; }
.collapse { flex: 1; display: flex; justify-content: flex-end; align-items: flex-end; padding: 0 12px 2px 0; color: #444; }

/* grid */
.gridwrap { flex: 1; display: flex; min-height: 0; }
.sheetcol { width: 1898px; display: flex; flex-direction: column; flex: none; }
.colhead { height: 23px; display: flex; background: #f1f1f1; border-bottom: 1px solid #a0a0a0; font-size: 15.500px; color: #444; }
.colhead span { flex: none; width: 80px; padding-left: 2px; text-align: center; line-height: 25px; height: 22px; overflow: visible; border-right: 1px solid #d9d9d9; }
.colhead span.last { width: 25px; border: 0; }
.colhead span.sel { background: #d9d9d9; color: #107c41; }
.corner { flex: none; width: 33px; position: relative; border-right: 1px solid #bbb; display: flex; justify-content: flex-end; padding: 5px 3px 3px 0; }
.corner i { width: 15px; height: 15px; background: linear-gradient(135deg, transparent 50%, #dcdcdc 50%); }
.sheet { flex: 1; display: flex; min-height: 0; }
.rowhead { width: 33px; overflow: hidden; background: #f1f1f1; border-right: 1px solid #a0a0a0; font-size: 15.500px; color: #444; }
.rowhead span { display: block; height: 24px; line-height: 26px; text-align: center; border-bottom: 1px solid #dcdcdc; }
.rowhead span.sel { background: #d9d9d9; color: #107c41; }
.canvas { flex: 1; background: #fff; position: relative; }
.cellsel { position: absolute; left: -1px; top: 0; width: 82px; height: 25px; border: 2px solid #1f7145; }
.cellsel i { position: absolute; right: -4px; bottom: -4px; width: 6px; height: 6px; background: #1f7145; border: 1px solid #fff; }
.shape { position: absolute; width: 290px; height: 90px; filter: drop-shadow(-1px 3px 3px rgba(0,0,0,.4)); }
.shape span { position: absolute; top: 0; height: 90px; line-height: 85px; font-size: 21.500px; color: #111; white-space: nowrap; font-family: "Noto Sans", sans-serif; }
.a1 { left: 156px; top: 43px; } .a1 span { left: 55px; }
.a2 { left: 155px; top: 146px; } .a2 span { left: 55px; }
.a3 { left: 155px; top: 247px; } .a3 span { left: 54px; }
.a4 { left: 155px; top: 349px; } .a4 span { left: 36px; }
.a5 { left: 155px; top: 450px; } .a5 span { left: 54px; }

.vscroll { width: 22px; display: flex; flex-direction: column; align-items: center; background: #fafafa; border-radius: 11px; padding: 5px 0 4px; }
.vscroll i { width: 11px; flex: 1; background: #6f6f6f; border-radius: 6px; margin: 7px 0 18px; }

/* sheet tabs */
.tabbar {
  height: 40px; display: flex; align-items: flex-start; background: #e2e5e7; border-top: 1px solid #e6e6e6; font-size: 16.500px; color: #222; padding-bottom: 1px;
  border-bottom: 1px solid #fff;
}
.nav { width: 142px; height: 38px; background: #e6e6e6; display: flex; align-items: center; gap: 32px; padding-left: 31px; border-radius: 0 6px 0 0; }
.sh { height: 30px; margin-top: 5px; border-radius: 5px; display: flex; align-items: center; justify-content: center; padding-bottom: 2px; }
.main-sh { width: 59px; height: 34px; margin-top: 0; padding-bottom: 0; background: linear-gradient(#f3f3f3, #cfcfcf); border: 1px solid #fff; border-top: 0; border-radius: 0 0 6px 6px; font-weight: 600; color: #333; }
.main-sh span { border-bottom: 3px solid #107c41; padding: 2px 0 1px; width: 41px; text-align: center; line-height: 22px; }
.shsep { width: 1px; height: 22px; background: #cfcfcf; margin: 8px 5px 0; }
.c1 { width: 136px; background: #f4b183; }
.c2 { width: 148px; background: #7030a0; color: #fff; }
.c3 { width: 116px; background: #ffd966; }
.c4 { width: 161px; background: #8faadc; }
.c5 { width: 125px; background: #a9d18e; }
.plus { margin: 11px 0 0 48px; }
.dots { margin: 12px 0 0 138px; }
.hscroll { margin: 8px 0 0 19px; width: 720px; height: 21px; border-radius: 10px; background: #f9f9f9; display: flex; align-items: center; padding: 0 6px; gap: 6px; }
.hscroll i { flex: 1; height: 11px; background: #6f6f6f; border-radius: 6px; margin-right: 24px; }

/* status */
.status { height: 27px; background: #f3f3f3; display: flex; align-items: center; font-size: 12.800px; color: #333; padding-left: 14px; }
.ready { width: 61px; }
.acc { margin-right: 4px; }
.a11y { width: 1450px; white-space: nowrap; }
.viewbtn { width: 50px; height: 27px; background: #dedede; display: flex; align-items: center; justify-content: center; }
.pagev { margin-left: 16px; }
.breakv { margin-left: 32px; }
.zm { margin-left: 23px; }
.slider { margin-left: 7px; width: 125px; height: 1px; background: #555; position: relative; }
.slider i { position: absolute; left: 60px; top: -7px; width: 6px; height: 14px; background: #555; }
.zp { margin-left: 6px; }
.zoomv { margin-left: 17px; font-size: 12px; color: #555; }

/* taskbar */
.taskbar { height: 60px; background: #1c2522; display: flex; align-items: center; color: #fff; font-size: 14px; border-top: 1px solid #111; }
.weather { display: flex; width: 530px; padding-left: 26px; align-items: center; gap: 8px; }
.badge { font: 700 12px "Open Sans", sans-serif; fill: #fff; text-anchor: middle; }
.wt { display: flex; flex-direction: column; line-height: 20px; margin-top: -2px; }
.dimt { color: #c8c8c8; }
.tsearch { margin-left: 19px; width: 271px; height: 38px; border-radius: 19px; background: #f3f3f3; display: flex; align-items: center; padding-left: 13px; gap: 11px; color: #555; font-size: 16px; position: relative; }
.deco { position: absolute; right: 6px; bottom: 0; }
.apps { display: grid; grid-template-columns: repeat(10, 55px); align-items: center; justify-items: center; margin-left: 4px; position: relative; height: 59px; }
.helpic { margin-left: 3px; margin-top: -3px; }
.teams { font: 700 10px "Liberation Sans", sans-serif; fill: #4b53bc; text-anchor: middle; }
.q { font: 700 18px "Liberation Sans", sans-serif; fill: #fff; text-anchor: middle; }
.xlactive { width: 49px; height: 50px; border-radius: 5px; background: #2a322f; display: flex; justify-content: center; align-items: center; position: relative; }
.xlactive i { position: absolute; bottom: 1px; left: 15px; width: 20px; height: 4px; border-radius: 2px; background: #4cc2ff; }
.chromedot { position: absolute; left: 464px; bottom: 5px; width: 8px; height: 4px; border-radius: 2px; background: #999; }
.tray { display: flex; align-items: center; }
.caret { margin-left: 103px; }
.cloud { margin-left: 23px; }
.lang { width: 40px; margin-left: 18px; text-align: center; display: flex; flex-direction: column; line-height: 20px; margin-top: -2px; }
.wifi { margin-left: 17px; }
.vol { margin-left: 10px; }
.batt { margin-left: 10px; }
.clock { width: 98px; text-align: right; display: flex; flex-direction: column; line-height: 20px; white-space: nowrap; margin-top: -2px; }
.bell { margin-left: 11px; }
.copilot { margin-left: 22px; }
.pre { font: 700 8.500px "Liberation Sans", sans-serif; fill: #222; text-anchor: middle; }
```
